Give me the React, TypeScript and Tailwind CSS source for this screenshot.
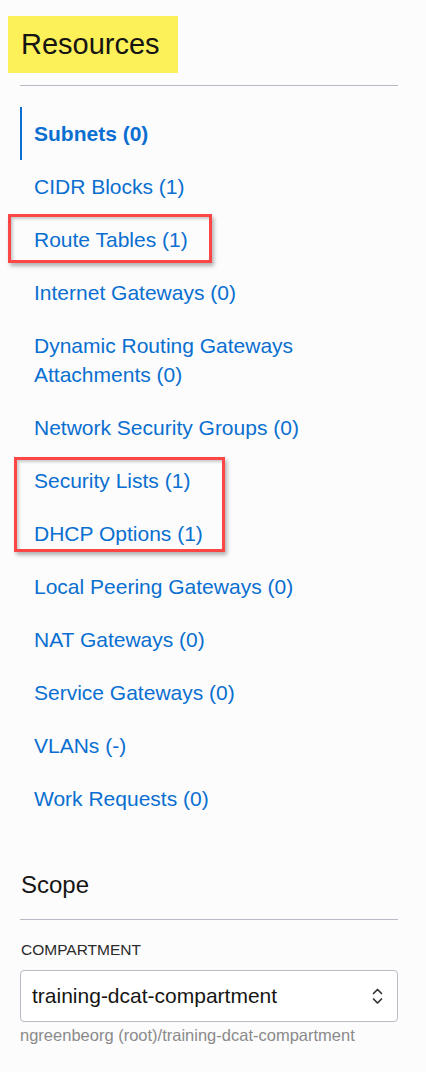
import React from 'react';

const items: { label: string; active?: boolean }[] = [
  { label: 'Subnets (0)', active: true },
  { label: 'CIDR Blocks (1)' },
  { label: 'Route Tables (1)' },
  { label: 'Internet Gateways (0)' },
  { label: 'Dynamic Routing Gateways Attachments (0)' },
  { label: 'Network Security Groups (0)' },
  { label: 'Security Lists (1)' },
  { label: 'DHCP Options (1)' },
  { label: 'Local Peering Gateways (0)' },
  { label: 'NAT Gateways (0)' },
  { label: 'Service Gateways (0)' },
  { label: 'VLANs (-)' },
  { label: 'Work Requests (0)' },
];

/** 上下箭头，select 右侧 */
function UpDownIcon() {
  return (
    <svg width="11" height="20" viewBox="0 0 11 20" fill="none" stroke="#333" strokeWidth="1.7" strokeLinecap="round" strokeLinejoin="round">
      <path d="M1.5 7.5 L5.5 3.5 L9.5 7.5" />
      <path d="M1.5 13 L5.5 17 L9.5 13" />
    </svg>
  );
}

export default function App() {
  return (
    <div className="relative w-[426px] h-[1072px] bg-[#fcfcfd] font-['Liberation_Sans',Arial,sans-serif] text-[#161513]">
      {/* 标题（黄色高亮） */}
      <div className="pt-[16px] pl-[8px]">
        <div className="w-[170px] h-[57px] bg-[#fdf15a] pl-[13px] flex items-center text-[29px]">Resources</div>
      </div>
      <div className="ml-[20px] mr-[28px] mt-[12px] border-t border-[#b8bac6]" />

      <ul className="mt-[21px] ml-[20px] mr-[28px]">
        {items.map((it) => (
          <li
            key={it.label}
            className={
              it.active
                ? 'border-l-2 border-[#0a6fd0] pl-[12px] py-[12px] text-[21px] leading-[29px] font-bold text-[#0a6fd0]'
                : 'border-l-2 border-transparent pl-[12px] py-[12px] pr-[90px] text-[21px] leading-[29px] text-[#0a6fd0]'
            }
          >
            {it.label}
          </li>
        ))}
      </ul>

      {/* Scope */}
      <div className="ml-[20px] mr-[28px] mt-[45px]">
        <div className="text-[24px] leading-[30px] pl-px">Scope</div>
        <div className="mt-[19px] border-t border-[#b8bac6]" />
        <div className="mt-[20px] text-[15.5px] leading-[20px] pl-px text-[#2b2b2b]">COMPARTMENT</div>
        <div className="mt-[10px] h-[52px] rounded-[4px] border border-[#b9bbc4] bg-white flex items-center justify-between pl-[11px] pr-[14px]">
          <span className="text-[21px]">training-dcat-compartment</span>
          <UpDownIcon />
        </div>
        <div className="mt-[3px] text-[16.5px] leading-[20px] text-[#8a8a8a]">ngreenbeorg (root)/training-dcat-compartment</div>
      </div>

      {/* 红框标注 */}
      <div className="absolute left-[8px] top-[214px] w-[204px] h-[49px] border-[3px] border-[#fd4646] shadow-[2px_3px_4px_rgba(0,0,0,0.3),inset_2px_2px_3px_rgba(0,0,0,0.2)]" />
      <div className="absolute left-[14px] top-[457px] w-[211px] h-[95px] border-[3px] border-[#fd4646] shadow-[2px_3px_4px_rgba(0,0,0,0.3),inset_2px_2px_3px_rgba(0,0,0,0.2)]" />
    </div>
  );
}
